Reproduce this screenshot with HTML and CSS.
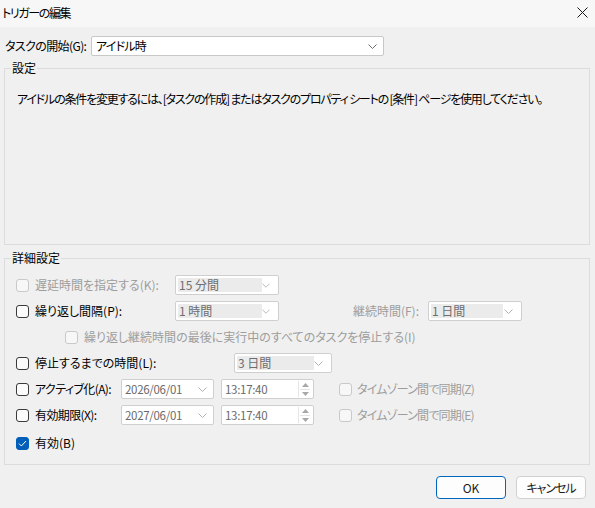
FILE: index.html
```html
<!DOCTYPE html>
<html lang="ja">
<head>
<meta charset="utf-8">
<link rel="stylesheet" href="styles.css">
</head>
<body>
<div class="window">
  <div class="titlebar">
    <span class="title">トリガーの編集</span>
    <svg class="close" width="11" height="11" viewBox="0 0 11 11"><path d="M0.5 0.5L10.5 10.5M10.5 0.5L0.5 10.5" stroke="#1a1a1a" stroke-width="1" fill="none"/></svg>
  </div>
  <div class="content">
    <div class="row start-row">
      <span class="start-label">タスクの開始(G):</span>
      <div class="combo start-combo">
        <span class="combo-text">アイドル時</span>
        <svg class="chev" width="9" height="5" viewBox="0 0 9 5"><path d="M0.5 0.5L4.5 4.5L8.5 0.5" stroke="#707070" fill="none"/></svg>
      </div>
    </div>

    <fieldset class="group settings">
      <legend>設定</legend>
      <p class="info">アイドルの条件を変更するには、[タスクの作成] またはタスクのプロパティ シートの [条件] ページを使用してください。</p>
    </fieldset>

    <fieldset class="group advanced">
      <legend>詳細設定</legend>

      <div class="arow">
        <span class="cb disabled"></span>
        <span class="alabel lab-main disabled-text">遅延時間を指定する(K):</span>
        <div class="combo dcombo w104"><span class="sel">15 分間</span><svg class="chev" width="9" height="5" viewBox="0 0 9 5"><path d="M0.5 0.5L4.5 4.5L8.5 0.5" stroke="#b0b0b0" fill="none"/></svg></div>
      </div>

      <div class="arow">
        <span class="cb"></span>
        <span class="alabel lab-main">繰り返し間隔(P):</span>
        <div class="combo dcombo w104"><span class="sel">1 時間</span><svg class="chev" width="9" height="5" viewBox="0 0 9 5"><path d="M0.5 0.5L4.5 4.5L8.5 0.5" stroke="#b0b0b0" fill="none"/></svg></div>
        <span class="dur-label disabled-text">継続時間(F):</span>
        <div class="combo dcombo w94"><span class="sel">1 日間</span><svg class="chev" width="9" height="5" viewBox="0 0 9 5"><path d="M0.5 0.5L4.5 4.5L8.5 0.5" stroke="#b0b0b0" fill="none"/></svg></div>
      </div>

      <div class="arow sub">
        <span class="cb disabled"></span>
        <span class="alabel disabled-text">繰り返し継続時間の最後に実行中のすべてのタスクを停止する(I)</span>
      </div>

      <div class="arow">
        <span class="cb"></span>
        <span class="alabel lab-stop">停止するまでの時間(L):</span>
        <div class="combo dcombo w98"><span class="sel">3 日間</span><svg class="chev" width="9" height="5" viewBox="0 0 9 5"><path d="M0.5 0.5L4.5 4.5L8.5 0.5" stroke="#b0b0b0" fill="none"/></svg></div>
      </div>

      <div class="arow">
        <span class="cb"></span>
        <span class="alabel lab-date">アクティブ化(A):</span>
        <div class="combo picker w93"><span class="ptext">2026/06/01</span><svg class="chev" width="9" height="5" viewBox="0 0 9 5"><path d="M0.5 0.5L4.5 4.5L8.5 0.5" stroke="#b0b0b0" fill="none"/></svg></div>
        <div class="combo picker time w93"><span class="ptext">13:17:40</span>
          <span class="spin"><svg width="7" height="4" viewBox="0 0 7 4"><path d="M0 4L3.5 0L7 4Z" fill="#a8a8a8"/></svg><span class="spin-sep"></span><svg width="7" height="4" viewBox="0 0 7 4"><path d="M0 0L3.5 4L7 0Z" fill="#a8a8a8"/></svg></span>
        </div>
        <span class="cb disabled tz-cb"></span>
        <span class="tz-label disabled-text">タイムゾーン間で同期(Z)</span>
      </div>

      <div class="arow">
        <span class="cb"></span>
        <span class="alabel lab-date">有効期限(X):</span>
        <div class="combo picker w93"><span class="ptext">2027/06/01</span><svg class="chev" width="9" height="5" viewBox="0 0 9 5"><path d="M0.5 0.5L4.5 4.5L8.5 0.5" stroke="#b0b0b0" fill="none"/></svg></div>
        <div class="combo picker time w93"><span class="ptext">13:17:40</span>
          <span class="spin"><svg width="7" height="4" viewBox="0 0 7 4"><path d="M0 4L3.5 0L7 4Z" fill="#a8a8a8"/></svg><span class="spin-sep"></span><svg width="7" height="4" viewBox="0 0 7 4"><path d="M0 0L3.5 4L7 0Z" fill="#a8a8a8"/></svg></span>
        </div>
        <span class="cb disabled tz-cb"></span>
        <span class="tz-label disabled-text">タイムゾーン間で同期(E)</span>
      </div>

      <div class="arow enabled-row">
        <span class="cb checked"><svg width="9" height="7" viewBox="0 0 9 7"><path d="M1 3.6L3.4 6L8 1" stroke="#ffffff" stroke-width="1" fill="none"/></svg></span>
        <span class="alabel">有効(B)</span>
      </div>
    </fieldset>

    <div class="buttons">
      <button class="btn primary">OK</button>
      <button class="btn cancel">キャンセル</button>
    </div>
  </div>
</div>
</body>
</html>
```

FILE: styles.css
```css
* { box-sizing: border-box; }
html, body { margin: 0; padding: 0; }
body {
  width: 595px;
  height: 508px;
  background: #f0f0f0;
  font-family: "Noto Sans CJK JP", "Noto Sans", sans-serif;
  font-size: 12px;
  font-feature-settings: "palt";
  color: #000;
  overflow: hidden;
}
.window { width: 595px; height: 508px; }
.titlebar {
  height: 27px;
  background: #f7f7f7;
  display: flex;
  align-items: center;
  justify-content: space-between;
  padding: 0 7px 2px 2px;
}
.title { font-size: 12px; line-height: 16px; letter-spacing: -1.4px; }
.close { display: block; }

.content { padding: 9px 6px 0 4px; }
.row { display: flex; align-items: center; }
.start-row { height: 20px; }
.start-label {
  flex: none;
  padding-left: 1px;
  width: 87px;
  line-height: 16px;
  white-space: nowrap;
  letter-spacing: -0.6px;
}
.combo {
  position: relative;
  height: 20px;
  background: #fff;
  border: 1px solid #cdcdcd;
  border-radius: 2px;
  display: flex;
  align-items: center;
  flex: none;
}
.start-combo { width: 293px; padding-left: 4px; border-color: #c8c8c8; }
.combo-text { flex: 1; line-height: 16px; letter-spacing: -0.8px; }
.chev { display: block; margin-right: 6px; }

.group {
  margin: 0;
  padding: 0;
  border: 1px solid #dcdcdc;
  min-width: 0;
}
.group legend {
  margin-left: 6px;
  padding: 0 1px;
  line-height: 16px;
  font-size: 12px;
}
.settings { margin-top: 4px; height: 185px; width: 586px; }
.info {
  margin: 15px 0 0 12px;
  line-height: 16px;
  letter-spacing: -1.2px;
  white-space: nowrap;
}

.advanced { margin-top: 5px; height: 215px; width: 586px; padding: 9px 0 0 11px; }
.advanced legend { margin-left: -5px; }

.arow { display: flex; align-items: center; height: 20px; margin-bottom: 6px; }
.arow.sub { padding-left: 49px; }
.arow.enabled-row { margin-top: 8px; }

.cb {
  width: 13px;
  height: 13px;
  border: 1px solid #3a3a3a;
  border-radius: 3px;
  background: #fbfbfb;
  flex: none;
  display: flex;
  align-items: center;
  justify-content: center;
}
.cb.disabled { border-color: #c9c9c9; background: #f7f7f7; }
.cb.checked { background: #005fb8; border-color: #005fb8; }
.cb.checked svg { display: block; }

.alabel { margin-left: 6px; line-height: 16px; white-space: nowrap; flex: none; }
.lab-main { width: 140px; }
.lab-stop { width: 199px; }
.lab-date { width: 86px; letter-spacing: -0.6px; }
.disabled-text { color: #9d9d9d; }

.dcombo { padding: 2px; justify-content: space-between; border-color: #cfcfcf; }
.dcombo .sel {
  flex: none;
  height: 14px;
  background: #ebebeb;
  color: #6e6e6e;
  line-height: 14px;
  padding-left: 1px;
  font-size: 12px;
}
.w104 { width: 104px; }
.w104 .sel { width: 84px; }
.w94 { width: 94px; }
.w94 .sel { width: 72px; }
.w98 { width: 98px; }
.w98 .sel { width: 77px; }
.w93 { width: 93px; }

.dur-label { flex: none; width: 140px; text-align: right; margin-right: 9px; line-height: 16px; }

.picker { padding-left: 3px; justify-content: space-between; border-color: #cfcfcf; }
.ptext { color: #6a6a6a; line-height: 16px; font-size: 11.5px; letter-spacing: -0.3px; }
.picker.time { margin-left: 7px; }
.spin {
  display: flex;
  flex-direction: column;
  align-items: center;
  justify-content: center;
  gap: 2px;
  width: 13px;
  height: 16px;
  margin-right: 2px;
  border-left: 1px solid #e6e6e6;
}
.spin svg { display: block; }
.spin-sep { width: 10px; height: 1px; background: #e3e3e3; }

.tz-cb { margin-left: 25px; }
.tz-label { margin-left: 5px; line-height: 16px; letter-spacing: -0.8px; }

.buttons {
  display: flex;
  justify-content: flex-end;
  gap: 10px;
  margin-top: 11px;
  padding-right: 3px;
}
.btn {
  font-family: "Noto Sans CJK JP", "Noto Sans", sans-serif;
  font-size: 12px;
  font-feature-settings: "palt";
  width: 70px;
  height: 23px;
  background: #fdfdfd;
  border: 1px solid #d0d0d0;
  border-radius: 4px;
  color: #1a1a1a;
  padding: 0;
  line-height: 16px;
}
.btn.primary { border-color: #0067c0; }
.btn.cancel { letter-spacing: -1px; }
```
